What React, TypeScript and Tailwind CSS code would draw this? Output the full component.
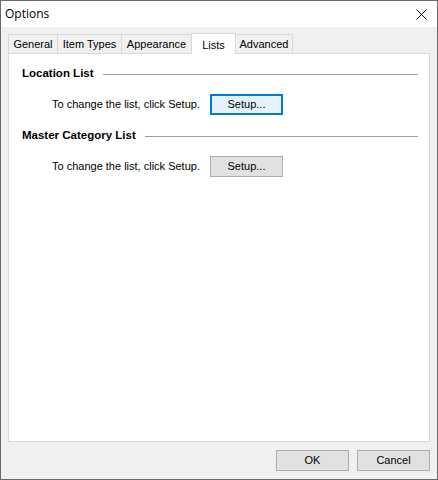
const tabs = [
  { label: "General", w: "w-[50px]" },
  { label: "Item Types", w: "w-[65px]" },
  { label: "Appearance", w: "w-[71px]" },
  { label: "Lists", w: "w-[45px]", active: true },
  { label: "Advanced", w: "w-[58px]" },
];

const Section = ({ title, focused }: { title: string; focused?: boolean }) => (
  <div className="flex flex-col">
    <div className="flex items-center h-[14px]">
      <span className="font-bold text-[11.5px] text-black leading-none whitespace-nowrap">{title}</span>
      <div className="flex-1 h-px bg-[#a0a0a0] ml-[9px]" />
    </div>
    <div className="flex items-center mt-[13px] pl-[30px]">
      <span className="w-[158px] text-[11px] text-black whitespace-nowrap">To change the list, click Setup.</span>
      <button
        className={
          focused
            ? "w-[73px] h-[21px] bg-[#e5f1fb] border-2 border-[#0078d7] text-[11px] text-black flex items-center justify-center"
            : "w-[73px] h-[21px] bg-[#e1e1e1] border border-[#adadad] text-[11px] text-black flex items-center justify-center"
        }
      >
        Setup...
      </button>
    </div>
  </div>
);

const App = () => {
  return (
    <div
      className="w-[438px] h-[480px] flex flex-col border border-[#6a6a6a] bg-[#f0f0f0] overflow-hidden"
      style={{ fontFamily: '"Liberation Sans", Arial, sans-serif' }}
    >
      <div className="h-[26px] bg-white flex items-center justify-between pl-[4px] pr-[10px] shrink-0">
        <span className="text-[12px] text-black" style={{ fontFamily: '"Open Sans", "Noto Sans", sans-serif' }}>
          Options
        </span>
        <svg width="11" height="11" viewBox="0 0 11 11" className="shrink-0">
          <path d="M0.5 0.5 L10.5 10.5 M10.5 0.5 L0.5 10.5" stroke="#000" strokeWidth="1" />
        </svg>
      </div>

      <div className="flex-1 flex flex-col pl-[7px] pr-[7px] pt-[5px]">
        <div className="flex items-end h-[21px]">
          {tabs.map((t, i) =>
            t.active ? (
              <div
                key={t.label}
                className={`${t.w} h-[21px] -ml-px bg-white border border-b-0 border-[#d9d9d9] relative z-10 -mb-px flex items-start justify-center pt-[3px] text-[11px] text-black`}
              >
                {t.label}
              </div>
            ) : (
              <div
                key={t.label}
                className={`${t.w} h-[19px] ${i === 0 ? "" : "-ml-px"} bg-[#f0f0f0] border border-b-0 border-[#d9d9d9] flex items-center justify-center text-[11px] text-black`}
              >
                {t.label}
              </div>
            )
          )}
        </div>

        <div className="h-[389px] bg-white border border-[#d9d9d9] pl-[13px] pr-[11px] pt-[13px] flex flex-col gap-[14px]">
          <Section title="Location List" focused />
          <Section title="Master Category List" />
        </div>

        <div className="flex justify-end gap-[8px] mt-[8px]">
          <button className="w-[73px] h-[21px] bg-[#e1e1e1] border border-[#adadad] text-[11px] text-black">OK</button>
          <button className="w-[73px] h-[21px] bg-[#e1e1e1] border border-[#adadad] text-[11px] text-black">Cancel</button>
        </div>
      </div>
    </div>
  );
};

export default App;
